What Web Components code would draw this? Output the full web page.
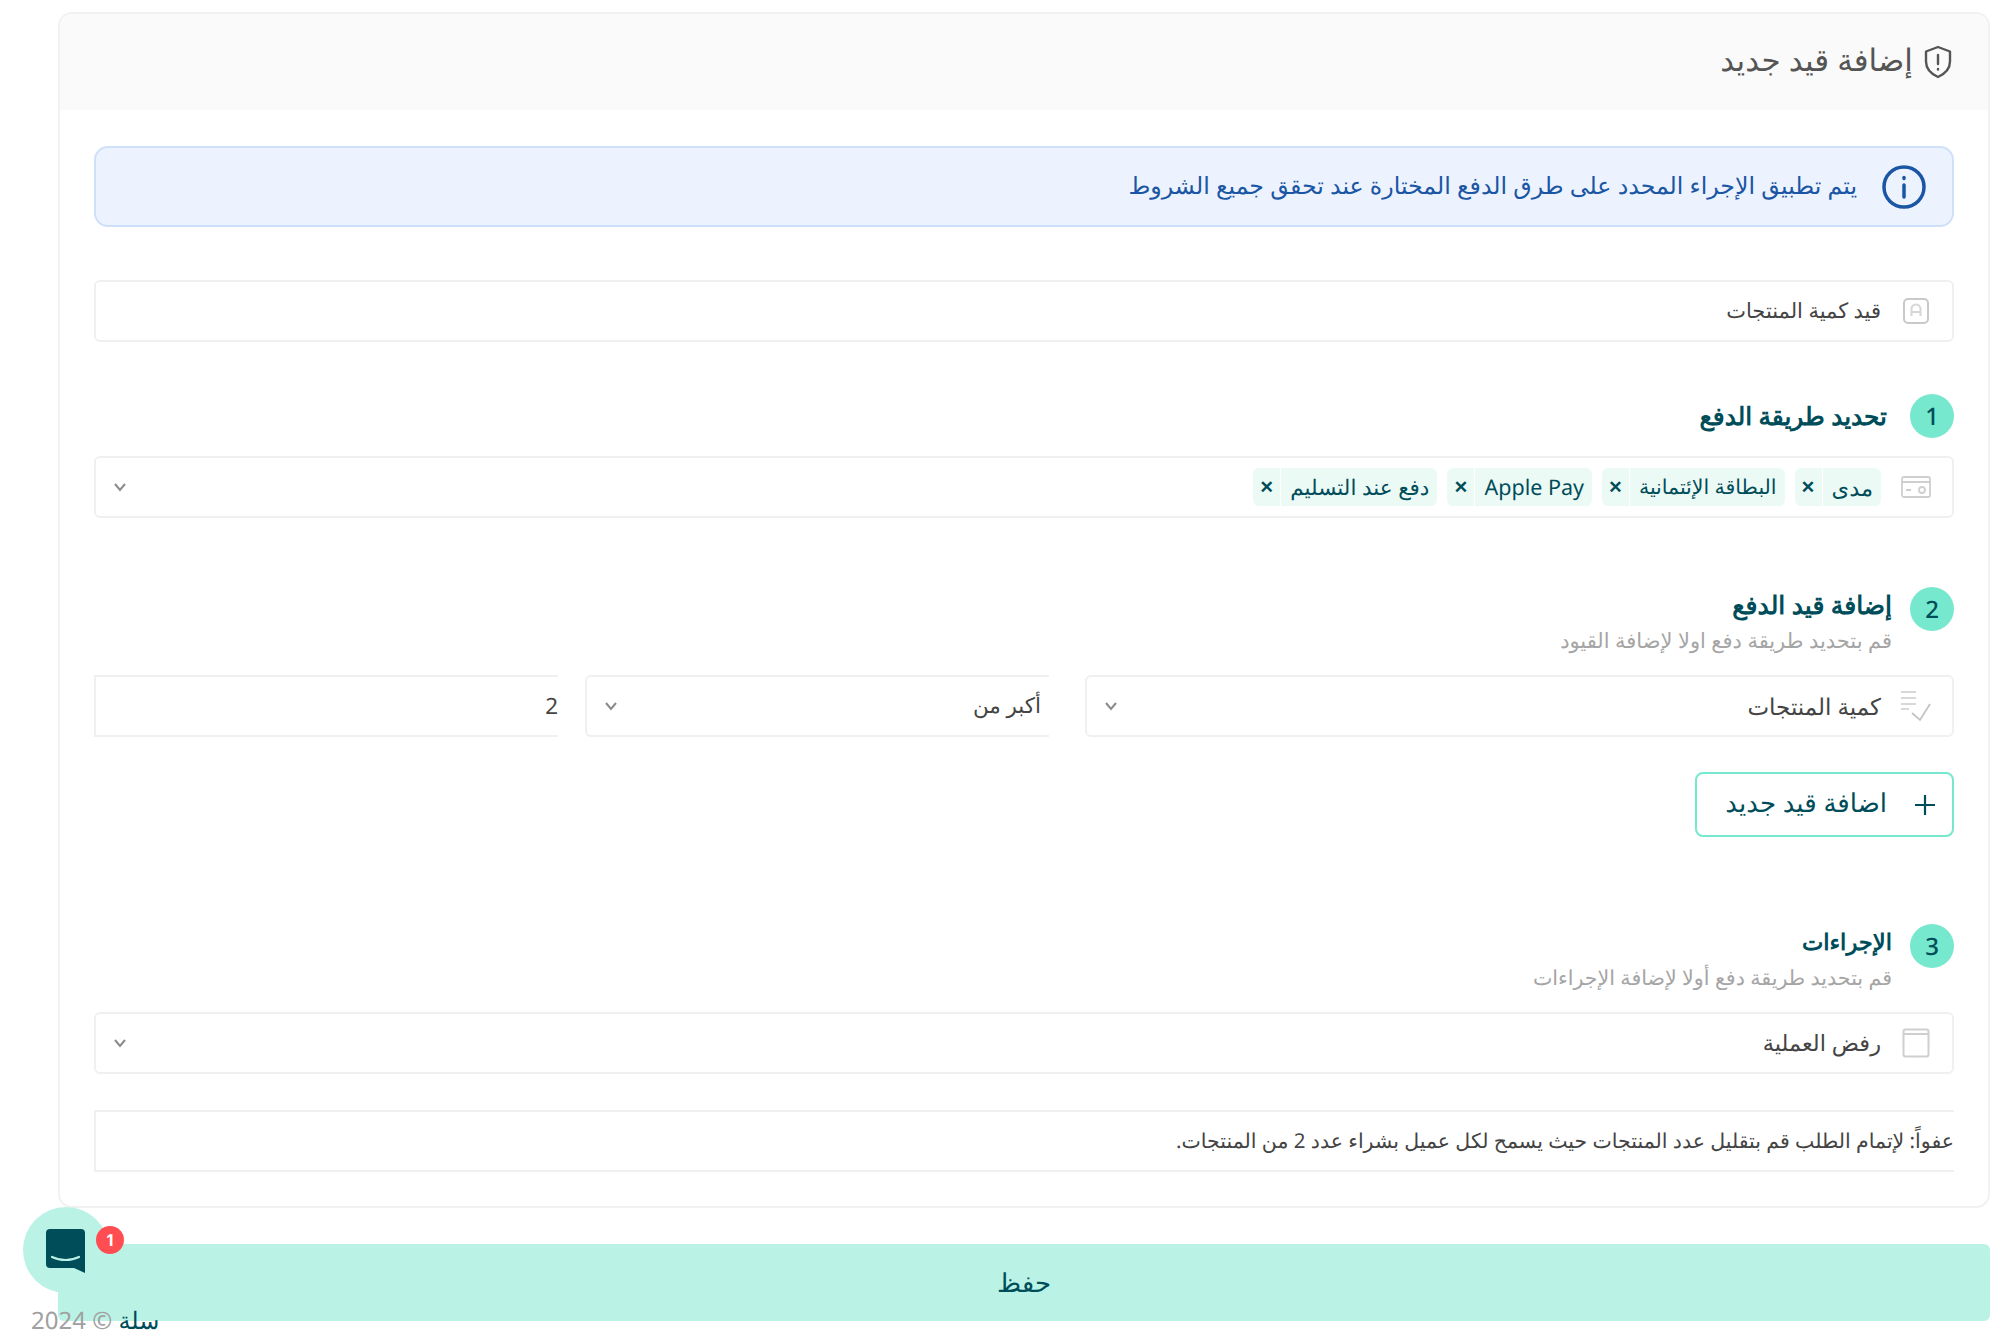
<!DOCTYPE html>
<html lang="ar" dir="rtl">
<head>
<meta charset="utf-8">
<title>إضافة قيد جديد</title>
<style>
  html, body { margin: 0; padding: 0; background: #fff; }
  body { font-family: "Noto Sans", "Open Sans", sans-serif; color: #444; height: 1342px; overflow: hidden; text-rendering: geometricPrecision; }
</style>
</head>
<body>
<rule-page>
  <rule-card heading="إضافة قيد جديد">
    <rule-alert>يتم تطبيق الإجراء المحدد على طرق الدفع المختارة عند تحقق جميع الشروط</rule-alert>
    <rule-field icon="name" style="margin-top:53px;font-size:21px">قيد كمية المنتجات</rule-field>
    <rule-step num="1" heading="تحديد طريقة الدفع" style="margin-top:52px;--gap:23px;--h:24.800px"></rule-step>
    <rule-field icon="card" arrow style="margin-top:18px">
      <rule-chip style="font-size:22.500px">مدى</rule-chip>
      <rule-chip style="font-size:20.500px">البطاقة الإئتمانية</rule-chip>
      <rule-chip>Apple Pay</rule-chip>
      <rule-chip>دفع عند التسليم</rule-chip>
    </rule-field>
    <rule-step num="2" heading="إضافة قيد الدفع" sub="قم بتحديد طريقة دفع اولا لإضافة القيود" style="margin-top:69px;--h:25px"></rule-step>
    <rule-row style="margin-top:19px">
      <rule-field icon="list" arrow style="flex:1;font-size:23px">كمية المنتجات</rule-field>
      <rule-field arrow open style="flex:0 0 464px;margin-right:36px;font-size:21.500px">أكبر من</rule-field>
      <rule-field plain style="flex:0 0 464px;margin-right:27px">2</rule-field>
    </rule-row>
    <rule-button style="margin-top:35px">اضافة قيد جديد</rule-button>
    <rule-step num="3" heading="الإجراءات" sub="قم بتحديد طريقة دفع أولا لإضافة الإجراءات" style="margin-top:87px;--h:22.600px;--s:20.600px"></rule-step>
    <rule-field icon="box" arrow style="margin-top:19px">رفض العملية</rule-field>
    <rule-field bare style="margin-top:36px;font-size:20.500px">عفواً: لإتمام الطلب قم بتقليل عدد المنتجات حيث يسمح لكل عميل بشراء عدد 2 من المنتجات.</rule-field>
  </rule-card>
  <rule-save>حفظ</rule-save>
  <rule-foot></rule-foot>
  <rule-chat></rule-chat>
</rule-page>

<script>
const ICONS = {
  name: '<svg width="28" height="28" viewBox="0 0 28 28" fill="none" stroke="#c9c9c9" stroke-width="2"><rect x="2" y="2" width="24" height="24" rx="4"/><path d="M9.5 19v-7a4.5 4.5 0 0 1 9 0v7M9.5 15h9" stroke="#d6d6d6"/></svg>',
  card: '<svg width="30" height="22" viewBox="0 0 30 22" fill="none" stroke="#cfcfcf" stroke-width="1.8"><rect x="1" y="1" width="28" height="20" rx="2"/><path d="M1 6h28M5 14h5"/><circle cx="21" cy="14" r="3"/></svg>',
  list: '<svg width="32" height="32" viewBox="0 0 32 32" fill="none" stroke="#d8d8d8" stroke-width="1.8"><path d="M1 2h15M1 8h15M1 14h15M1 19h8"/><path d="M12 23l8 7 10-16" stroke="#c4c4c4"/></svg>',
  box: '<svg width="28" height="30" viewBox="0 0 28 30" fill="none" stroke="#cfcfcf" stroke-width="2"><rect x="1.5" y="1.5" width="25" height="27" rx="2"/><path d="M1.5 6h25"/></svg>'
};

class RulePage extends HTMLElement {
  constructor() {
    super();
    this.attachShadow({ mode: 'open' });
    this.shadowRoot.innerHTML = `
      <style>
        :host { display: block; position: relative; height: 1342px; padding: 12px 9px 0 58px; box-sizing: border-box; }
      </style>
      <slot></slot>
    `;
  }
}

class RuleCard extends HTMLElement {
  constructor() {
    super();
    this.attachShadow({ mode: 'open' });
    this.shadowRoot.innerHTML = `
      <style>
        :host { display: block; border: 2px solid #f1f1f1; border-radius: 14px; overflow: hidden; box-sizing: border-box; height: 1196px; }
        header { height: 96px; background: #fafafa; display: flex; align-items: center; gap: 10px; padding: 0 35px; box-sizing: border-box; color: #555; font-size: 31px; font-weight: 500; }
        .t { margin-top: -4px; }
        .body { padding: 36px 34px 0; }
        svg { flex: none; }
      </style>
      <header>
        <svg width="30" height="34" viewBox="0 0 30 34" fill="none" stroke="#555" stroke-width="2.4" stroke-linejoin="round" stroke-linecap="round"><path d="M15 2l12 4.5v10c0 7.5-5.5 12.500-12 15.500-6.500-3-12-8-12-15.500v-10z"/><path d="M15 10v9M15 24v.5"/></svg>
        <span class="t"></span>
      </header>
      <div class="body"><slot></slot></div>
    `;
    this.shadowRoot.querySelector('.t').textContent = this.getAttribute('heading');
  }
}

class RuleAlert extends HTMLElement {
  constructor() {
    super();
    this.attachShadow({ mode: 'open' });
    this.shadowRoot.innerHTML = `
      <style>
        :host { display: flex; align-items: center; gap: 25px; height: 81px; box-sizing: border-box; padding: 0 26px; background: #ecf3fe; border: 2px solid #cfe0fa; border-radius: 14px; color: #1a56a4; font-size: 23.700px; }
        span { margin-top: -4px; }
      </style>
      <svg width="44" height="44" viewBox="0 0 44 44" fill="none" stroke="#1a56a4" stroke-width="3.500" stroke-linecap="round"><circle cx="22" cy="22" r="20"/><path d="M22 20v12M22 12.500v1"/></svg>
      <span><slot></slot></span>
    `;
  }
}

class RuleField extends HTMLElement {
  constructor() {
    super();
    this.attachShadow({ mode: 'open' });
    const icon = this.getAttribute('icon');
    this.shadowRoot.innerHTML = `
      <style>
        :host { display: flex; align-items: center; height: 62px; box-sizing: border-box; border: 2px solid #f0f0f0; border-radius: 6px; padding: 0 20px 0 17px; font-size: 22.500px; color: #444; gap: 19px; }
        :host([open]) { border-right: 0; padding-right: 8px; border-radius: 6px 0 0 6px; }
        :host([plain]) { border-right: 0; border-radius: 0; padding-right: 0; }
        :host([bare]) { border-right: 0; border-radius: 0; padding-right: 0; border-left: 2px solid #f0f0f0; }
        .icon { flex: none; display: flex; width: 32px; justify-content: center; }
        .val { flex: 1; display: flex; align-items: center; gap: 10px; white-space: nowrap; padding-bottom: 1px; }
        svg.arrow { flex: none; }
      </style>
      ${icon ? `<span class="icon">${ICONS[icon]}</span>` : ''}
      <span class="val"><slot></slot></span>
      ${this.hasAttribute('arrow') ? '<svg class="arrow" width="14" height="10" viewBox="0 0 14 10" fill="none" stroke="#8a8a8a" stroke-width="2"><path d="M2 2l5 6 5-6"/></svg>' : ''}
    `;
  }
}

class RuleChip extends HTMLElement {
  constructor() {
    super();
    this.attachShadow({ mode: 'open' });
    this.shadowRoot.innerHTML = `
      <style>
        :host { display: inline-flex; align-items: center; height: 38px; margin-top: 1px; padding: 0 8px 0 0; background: #ecfaf6; border-radius: 6px; color: #004d5a; font-size: 21.500px; }
        i { flex: none; width: 28px; height: 100%; display: flex; align-items: center; justify-content: center; box-sizing: border-box; font-style: normal; font-weight: 700; font-size: 22px; border-right: 1px solid #fff; margin-right: 9px; font-family: "Liberation Sans", sans-serif; }
      </style>
      <slot></slot><i>×</i>
    `;
  }
}

class RuleStep extends HTMLElement {
  constructor() {
    super();
    this.attachShadow({ mode: 'open' });
    const sub = this.getAttribute('sub');
    this.shadowRoot.innerHTML = `
      <style>
        :host { display: flex; align-items: ${sub ? 'flex-start' : 'center'}; gap: var(--gap, 18px); min-height: 44px; }
        b { flex: none; width: 44px; height: 44px; border-radius: 50%; background: #76e8cd; color: #004d5a; font-weight: 500; font-size: 24px; display: flex; align-items: center; justify-content: center; }
        h3 { margin: 0; font-size: var(--h, 24.500px); font-weight: 600; color: #004d5a; line-height: 36px; }
        p { margin: 3px 0 0; font-size: var(--s, 21px); color: #a5a5a5; line-height: 30px; }
      </style>
      <b>${this.getAttribute('num')}</b>
      <div><h3>${this.getAttribute('heading')}</h3>${sub ? `<p>${sub}</p>` : ''}</div>
    `;
  }
}

class RuleRow extends HTMLElement {
  constructor() {
    super();
    this.attachShadow({ mode: 'open' });
    this.shadowRoot.innerHTML = `
      <style>:host { display: flex; }</style>
      <slot></slot>
    `;
  }
}

class RuleButton extends HTMLElement {
  constructor() {
    super();
    this.attachShadow({ mode: 'open' });
    this.shadowRoot.innerHTML = `
      <style>
        :host { display: flex; width: fit-content; }
        button { display: flex; align-items: center; gap: 27px; width: 259px; height: 65px; padding: 0 16px; box-sizing: border-box; background: #fff; border: 2px solid #76e8cd; border-radius: 8px; color: #004d5a; font: inherit; font-size: 26px; text-rendering: geometricPrecision; }
        span { margin-top: -5px; }
      </style>
      <button>
        <svg width="22" height="22" viewBox="0 0 22 22" stroke="#004d5a" stroke-width="2.200"><path d="M11 1v20M1 11h20"/></svg>
        <span><slot></slot></span>
      </button>
    `;
  }
}

class RuleSave extends HTMLElement {
  constructor() {
    super();
    this.attachShadow({ mode: 'open' });
    this.shadowRoot.innerHTML = `
      <style>
        :host { display: flex; align-items: center; justify-content: center; height: 77px; box-sizing: border-box; padding-bottom: 2px; margin-top: 36px; background: #baf3e6; border-radius: 6px; color: #004d5a; font-size: 26px; font-weight: 500; }
      </style>
      <slot></slot>
    `;
  }
}

class RuleFoot extends HTMLElement {
  constructor() {
    super();
    this.attachShadow({ mode: 'open' });
    this.shadowRoot.innerHTML = `
      <style>
        :host { position: absolute; left: 31px; top: 1305px; font-size: 24px; line-height: 32px; color: #a0a0a0; white-space: nowrap; direction: rtl; }
        span { color: #004d5a; }
      </style>
      <span>سلة</span> © 2024
    `;
  }
}

class RuleChat extends HTMLElement {
  constructor() {
    super();
    this.attachShadow({ mode: 'open' });
    this.shadowRoot.innerHTML = `
      <style>
        :host { position: absolute; left: 23px; top: 1207px; width: 86px; height: 86px; border-radius: 50%; background: #baf3e6; display: flex; align-items: center; justify-content: center; }
        em { position: absolute; left: 73px; top: 19px; width: 28px; height: 28px; border-radius: 50%; background: #ff4d52; color: #fff; font: 700 16px/28px "Inter", sans-serif; text-align: center; }
        svg { margin: 1px 0 0 -2px; }
      </style>
      <svg width="39" height="44" viewBox="0 0 39 44"><path d="M4 0h31a4 4 0 0 1 4 4v40l-11-5H4a4 4 0 0 1-4-4V4a4 4 0 0 1 4-4z" fill="#004d5a"/><path d="M6 28c8 4 19 4 27 0" fill="none" stroke="#baf3e6" stroke-width="2.200" stroke-linecap="round"/></svg>
      <em>1</em>
    `;
  }
}

customElements.define('rule-page', RulePage);
customElements.define('rule-card', RuleCard);
customElements.define('rule-alert', RuleAlert);
customElements.define('rule-field', RuleField);
customElements.define('rule-chip', RuleChip);
customElements.define('rule-step', RuleStep);
customElements.define('rule-row', RuleRow);
customElements.define('rule-button', RuleButton);
customElements.define('rule-save', RuleSave);
customElements.define('rule-foot', RuleFoot);
customElements.define('rule-chat', RuleChat);
</script>
</body>
</html>
